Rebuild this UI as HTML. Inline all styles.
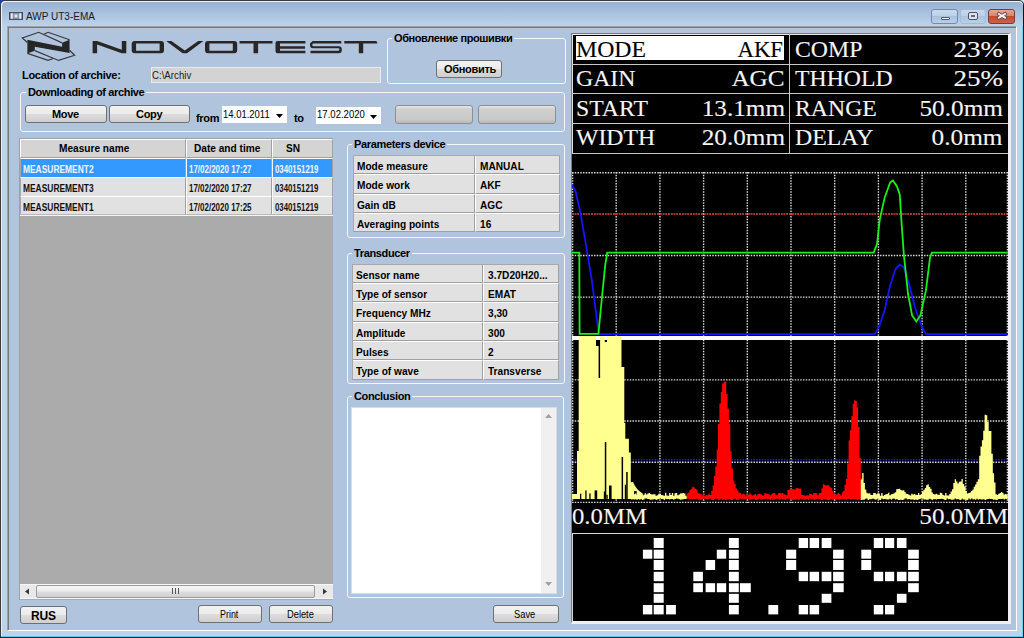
<!DOCTYPE html>
<html><head><meta charset="utf-8">
<style>
*{margin:0;padding:0;box-sizing:border-box}
html,body{width:1024px;height:638px;overflow:hidden;background:#1840d0}
body{position:relative;font-family:"Liberation Sans",sans-serif;font-size:11px;color:#000}
.a{position:absolute}
#win{left:0;top:0;width:1024px;height:638px;background:#bcd4ea;border:1px solid #3a3a3a;border-right-color:#061818;border-bottom-color:#0a2a30;border-radius:5px 5px 0 0}
#lw{left:1px;top:20px;width:1px;height:617px;background:#e4f0fa}
#cy{left:1022px;top:20px;width:1px;height:617px;background:#70d0f0}
#cyb{left:1px;top:636px;width:1022px;height:1px;background:#60c8e8}
#title{left:1px;top:1px;width:1022px;height:25px;border-top:1px solid #eef4fa;border-left:1px solid #eef4fa;border-radius:5px 5px 0 0;background:linear-gradient(#98b2d3,#bcd3eb)}
#client{left:7px;top:26px;width:1010px;height:605px;background:#b0c4de;border-top:1px solid #a0a0a0;border-left:1px solid #a0a0a0;border-right:1px solid #fff;border-bottom:1px solid #fff;box-shadow:inset 1px 1px 0 #787878}
.b{font-weight:bold;white-space:nowrap}
.t{white-space:nowrap;line-height:1;transform-origin:0 0;margin-top:1px}
.btn{border:1px solid #707070;border-radius:3px;background:linear-gradient(#f2f2f2 0,#ebebeb 50%,#dddddd 50%,#cfcfcf 100%);text-align:center;font-weight:bold;white-space:nowrap}
.grp{border:1px solid #f4f6f8;border-radius:3px}
.hc{background:#d4d4d4;border-top:1px solid #fff;border-left:1px solid #fff;border-right:1px solid #a0a0a0;border-bottom:1px solid #a0a0a0}
.dc{background:#e1e1e1;border-top:1px solid #fff;border-left:1px solid #fff;border-right:1px solid #a0a0a0;border-bottom:1px solid #a0a0a0}
.sc{background:#3399ff;border-top:1px solid #fff;border-left:1px solid #fff;border-right:1px solid #a0a0a0;border-bottom:1px solid #a0a0a0}
.ser{margin-top:0;font-family:"Liberation Serif",serif;font-size:23px;color:#f4f4f4;transform:scaleX(1.033);-webkit-text-stroke:0.1px currentColor}
.r{transform-origin:100% 0}
.gt{background:#b0c4de;padding:0 2px;font-weight:bold;white-space:nowrap}
</style></head><body>
<div class="a" style="left:1014px;top:0;width:10px;height:10px;background:#dce6ee"></div>
<div id="win" class="a"></div>
<div id="lw" class="a"></div><div id="cy" class="a"></div><div id="cyb" class="a"></div>
<div id="title" class="a"></div>
<div id="client" class="a"></div>


<!-- title bar -->
<svg class="a" style="left:9px;top:12px" width="14" height="8" viewBox="0 0 15 9" preserveAspectRatio="none"><rect x="0.5" y="0.5" width="14" height="8" fill="#7c8498" stroke="#40485a"/><rect x="2" y="1.5" width="2" height="6" fill="#f0f4fa"/><rect x="11" y="1.5" width="2" height="6" fill="#f0f4fa"/><rect x="5" y="2" width="5" height="5" fill="#aab2c0"/><rect x="6.5" y="3.5" width="2" height="2" fill="#fff"/></svg>
<div class="a t" style="left:26px;top:11px;font-size:10px;color:#1a1a1a">AWP UT3-EMA</div>
<div class="a" style="left:931px;top:9px;width:27px;height:15px;border:1px solid #6f8bb0;border-radius:3px;background:linear-gradient(#c9dbee 0,#bcd1e8 45%,#a9c1dd 50%,#b8cfe8 100%)"></div>
<div class="a" style="left:941px;top:17px;width:9px;height:3px;background:#f4f4f4;border:1px solid #4a5a70;border-radius:1px"></div>
<div class="a" style="left:960px;top:9px;width:26px;height:15px;border:1px solid #a4bad6;border-radius:3px;background:linear-gradient(#c6d9ee 0,#bbd0e8 45%,#adc4df 50%,#b9d0e8 100%)"></div>
<div class="a" style="left:968px;top:12px;width:10px;height:8px;background:#e2e2e2;border:1.5px solid #4e5366;border-radius:2px"></div>
<div class="a" style="left:971px;top:15px;width:4px;height:2px;background:#5a6a8c"></div>
<div class="a" style="left:988px;top:9px;width:27px;height:15px;border:1px solid #7a3a3a;border-radius:3px;background:linear-gradient(#e8a493 0,#d9826e 45%,#c44a2d 50%,#d0604a 100%)"></div>
<svg class="a" style="left:995px;top:10px" width="14" height="12" viewBox="0 0 14 12"><path d="M4,4 L10,7.6 M10,4 L4,7.6" stroke="#5a4a50" stroke-width="3.6" stroke-linecap="square"/><path d="M4,4 L10,7.6 M10,4 L4,7.6" stroke="#f4f4f4" stroke-width="2" stroke-linecap="square"/></svg>


<!-- logo -->
<svg class="a" style="left:18px;top:28px" width="80" height="38" viewBox="0 0 80 38">
<g transform="scale(0.078125)">
<polyline points="120,185 55,128 265,55 565,190" fill="none" stroke="#383838" stroke-width="15"/>
<polyline points="330,80 385,55 660,150" fill="none" stroke="#383838" stroke-width="15"/>
<polyline points="120,325 385,415 450,390" fill="none" stroke="#383838" stroke-width="15"/>
<polyline points="215,290 520,415 725,350 660,285" fill="none" stroke="#383838" stroke-width="15"/>
<polygon points="120,150 565,240 565,190 660,150 660,320 215,240 215,290 120,325" fill="#262626"/>
</g></svg>
<svg class="a" style="left:92px;top:40px" width="288" height="15" viewBox="92 40 288 15">
<g fill="#2a2626">
<path d="M92.6,41 h4.6 l24.6,8.8 V41 h4.5 v12.3 h-4.6 L97.1,44.5 V53.3 h-4.5z"/>
<path d="M134.7,41 h26.3 a3,3 0 0 1 3,3 v6.3 a3,3 0 0 1 -3,3 h-26.3 a3,3 0 0 1 -3,-3 v-6.3 a3,3 0 0 1 3,-3z M136.1,43.6 v7.1 h23.5 v-7.1z"/>
<path d="M166.2,41 h5.2 l13.4,9.6 l13.4,-9.6 h5.2 l-16.4,12.3 h-4.4z"/>
<path d="M208,41 h26.2 a3,3 0 0 1 3,3 v6.3 a3,3 0 0 1 -3,3 h-26.2 a3,3 0 0 1 -3,-3 v-6.3 a3,3 0 0 1 3,-3z M209.4,43.6 v7.1 h23.4 v-7.1z"/>
<path d="M239.5,41 h33 v2.6 h-14.4 v9.7 h-4.6 v-9.7 h-14z"/>
<path d="M277.5,41 h27.9 v2.6 h-25.4 v2.6 h25 v2.6 h-25 v1.9 h25.4 v2.6 h-27.9 a2,2 0 0 1 -2,-2 v-8.3 a2,2 0 0 1 2,-2z"/>
<path d="M312,41 h29.3 v2.6 h-27.7 a1.3,1.3 0 0 0 0,2.6 h25.2 a3,3 0 0 1 3,3 v1.1 a3,3 0 0 1 -3,3 h-28.3 v-2.6 h27.7 a1.2,1.2 0 0 0 0,-2.4 h-25.2 a3,3 0 0 1 -3,-3 v-1.3 a2.5,2.5 0 0 1 2.3,-2.3z"/>
<path d="M344.3,41 h31.5 a1.5,1.5 0 0 1 1.4,1.4 v1.2 h-14 v9.7 h-4.4 v-9.7 h-14.5z"/>
</g></svg>

<div class="a t b" style="left:22px;top:69px;font-size:11px;letter-spacing:-0.3px">Location of archive:</div>
<div class="a" style="left:151px;top:67px;width:230px;height:16px;background:#d3d3d3;border:1px solid #e6ebf0"></div>
<div class="a t" style="left:152px;top:69px;font-size:11px;transform:scaleX(.88);color:#202020">C:\Archiv</div>

<!-- Obnovlenie group -->
<div class="a grp" style="left:387px;top:38px;width:179px;height:46px"></div>
<div class="a t gt" style="left:392px;top:32px;font-size:11px;letter-spacing:-0.4px">Обновление прошивки</div>
<div class="a btn" style="left:436px;top:60px;width:66px;height:18px"></div>
<div class="a t b" style="left:444px;top:63px;font-size:11px;letter-spacing:-0.3px">Обновить</div>

<!-- Downloading group -->
<div class="a grp" style="left:20px;top:92px;width:545px;height:40px"></div>
<div class="a t gt" style="left:26px;top:86px;font-size:11px;letter-spacing:-0.35px">Downloading of archive</div>
<div class="a btn" style="left:25px;top:105px;width:82px;height:18px"></div>
<div class="a t b" style="left:52px;top:108px;font-size:11px;letter-spacing:-0.3px">Move</div>
<div class="a btn" style="left:109px;top:105px;width:81px;height:18px"></div>
<div class="a t b" style="left:136px;top:108px;font-size:11px;letter-spacing:-0.3px">Copy</div>
<div class="a t b" style="left:196px;top:112px;font-size:11px;letter-spacing:-0.3px">from</div>
<div class="a" style="left:222px;top:106px;width:65px;height:17px;background:#fff"></div>
<div class="a t" style="left:223px;top:108px;font-size:11px;transform:scaleX(.86)">14.01.2011</div>
<svg class="a" style="left:276px;top:114px" width="7" height="4"><path d="M0,0h7l-3.5,4z" fill="#000"/></svg>
<div class="a t b" style="left:294px;top:112px;font-size:11px;letter-spacing:-0.3px">to</div>
<div class="a" style="left:316px;top:107px;width:65px;height:17px;background:#fff"></div>
<div class="a t" style="left:317px;top:108px;font-size:11px;transform:scaleX(.87)">17.02.2020</div>
<svg class="a" style="left:370px;top:115px" width="7" height="4"><path d="M0,0h7l-3.5,4z" fill="#000"/></svg>
<div class="a" style="left:395px;top:105px;width:78px;height:19px;border:1px solid #8e8e8e;border-radius:3px;background:linear-gradient(#e6e6e6 0,#cfcfcf 20%,#c9c9c9 80%,#b8b8b8 100%)"></div>
<div class="a" style="left:478px;top:105px;width:78px;height:19px;border:1px solid #8e8e8e;border-radius:3px;background:linear-gradient(#e6e6e6 0,#cfcfcf 20%,#c9c9c9 80%,#b8b8b8 100%)"></div>


<!-- Parameters device -->
<div class="a grp" style="left:347px;top:144px;width:218px;height:94px"></div>
<div class="a t gt" style="left:352px;top:138px;font-size:11px;letter-spacing:-0.35px">Parameters device</div>
<div class="a" style="left:353px;top:155px;width:207px;height:77px;background:#a0a0a0"></div>
<div class="a dc" style="left:353px;top:155px;width:122px;height:19px"></div>
<div class="a dc" style="left:475px;top:155px;width:85px;height:19px"></div>
<div class="a t b" style="left:357px;top:160px;font-size:11px;transform:scaleX(.92)">Mode measure</div>
<div class="a t b" style="left:480px;top:160px;font-size:11px;transform:scaleX(.92)">MANUAL</div>
<div class="a dc" style="left:353px;top:174px;width:122px;height:20px"></div>
<div class="a dc" style="left:475px;top:174px;width:85px;height:20px"></div>
<div class="a t b" style="left:357px;top:179px;font-size:11px;transform:scaleX(.92)">Mode work</div>
<div class="a t b" style="left:480px;top:179px;font-size:11px;transform:scaleX(.92)">AKF</div>
<div class="a dc" style="left:353px;top:194px;width:122px;height:19px"></div>
<div class="a dc" style="left:475px;top:194px;width:85px;height:19px"></div>
<div class="a t b" style="left:357px;top:199px;font-size:11px;transform:scaleX(.92)">Gain dB</div>
<div class="a t b" style="left:480px;top:199px;font-size:11px;transform:scaleX(.92)">AGC</div>
<div class="a dc" style="left:353px;top:213px;width:122px;height:19px"></div>
<div class="a dc" style="left:475px;top:213px;width:85px;height:19px"></div>
<div class="a t b" style="left:357px;top:218px;font-size:11px;transform:scaleX(.92)">Averaging points</div>
<div class="a t b" style="left:480px;top:218px;font-size:11px;transform:scaleX(.92)">16</div>

<div class="a" style="left:353px;top:155px;width:207px;height:1px;background:#a8a8a8"></div><div class="a" style="left:353px;top:155px;width:1px;height:77px;background:#a8a8a8"></div>
<!-- Transducer -->
<div class="a grp" style="left:347px;top:253px;width:218px;height:131px"></div>
<div class="a t gt" style="left:352px;top:247px;font-size:11px;letter-spacing:-0.35px">Transducer</div>
<div class="a" style="left:352px;top:264px;width:207px;height:116px;background:#a0a0a0"></div>
<div class="a dc" style="left:352px;top:264px;width:131px;height:19px"></div>
<div class="a dc" style="left:483px;top:264px;width:76px;height:19px"></div>
<div class="a t b" style="left:356px;top:269px;font-size:11px;transform:scaleX(.92)">Sensor name</div>
<div class="a t b" style="left:488px;top:269px;font-size:11px;transform:scaleX(.92)">3.7D20H20...</div>
<div class="a dc" style="left:352px;top:283px;width:131px;height:19px"></div>
<div class="a dc" style="left:483px;top:283px;width:76px;height:19px"></div>
<div class="a t b" style="left:356px;top:288px;font-size:11px;transform:scaleX(.92)">Type of sensor</div>
<div class="a t b" style="left:488px;top:288px;font-size:11px;transform:scaleX(.92)">EMAT</div>
<div class="a dc" style="left:352px;top:302px;width:131px;height:20px"></div>
<div class="a dc" style="left:483px;top:302px;width:76px;height:20px"></div>
<div class="a t b" style="left:356px;top:307px;font-size:11px;transform:scaleX(.92)">Frequency MHz</div>
<div class="a t b" style="left:488px;top:307px;font-size:11px;transform:scaleX(.92)">3,30</div>
<div class="a dc" style="left:352px;top:322px;width:131px;height:19px"></div>
<div class="a dc" style="left:483px;top:322px;width:76px;height:19px"></div>
<div class="a t b" style="left:356px;top:327px;font-size:11px;transform:scaleX(.92)">Amplitude</div>
<div class="a t b" style="left:488px;top:327px;font-size:11px;transform:scaleX(.92)">300</div>
<div class="a dc" style="left:352px;top:341px;width:131px;height:19px"></div>
<div class="a dc" style="left:483px;top:341px;width:76px;height:19px"></div>
<div class="a t b" style="left:356px;top:346px;font-size:11px;transform:scaleX(.92)">Pulses</div>
<div class="a t b" style="left:488px;top:346px;font-size:11px;transform:scaleX(.92)">2</div>
<div class="a dc" style="left:352px;top:360px;width:131px;height:20px"></div>
<div class="a dc" style="left:483px;top:360px;width:76px;height:20px"></div>
<div class="a t b" style="left:356px;top:365px;font-size:11px;transform:scaleX(.92)">Type of wave</div>
<div class="a t b" style="left:488px;top:365px;font-size:11px;transform:scaleX(.92)">Transverse</div>

<div class="a" style="left:352px;top:264px;width:207px;height:1px;background:#a8a8a8"></div><div class="a" style="left:352px;top:264px;width:1px;height:116px;background:#a8a8a8"></div>
<!-- Conclusion -->
<div class="a grp" style="left:347px;top:396px;width:217px;height:202px"></div>
<div class="a t gt" style="left:352px;top:390px;font-size:11px;letter-spacing:-0.35px">Conclusion</div>
<div class="a" style="left:351px;top:407px;width:206px;height:187px;background:#fff;border:1px solid #d8dde3"></div>
<div class="a" style="left:541px;top:408px;width:15px;height:185px;background:#f0f0f0"></div>
<svg class="a" style="left:545px;top:414px" width="8" height="5"><path d="M0,4h7l-3.5,-4z" fill="#a0a0a0"/></svg>
<svg class="a" style="left:545px;top:582px" width="8" height="5"><path d="M0,0h7l-3.5,4z" fill="#a0a0a0"/></svg>
<div class="a btn" style="left:493px;top:605px;width:66px;height:18px"></div>
<div class="a t" style="left:514px;top:608px;font-size:11px;transform:scaleX(.85)">Save</div>

<!-- device panel -->
<div class="a" style="left:571px;top:33px;width:440px;height:591px;background:#000;border-top:1px solid #7a7a7a;border-left:1px solid #7a7a7a;border-right:3px solid #f0f0f0;border-bottom:3px solid #f0f0f0"></div>
<div class="a" style="left:572px;top:34px;width:436px;height:1px;background:#e8e8e8"></div>
<div class="a" style="left:572px;top:34px;width:1px;height:120px;background:#e0e0e0"></div>
<div class="a" style="left:572px;top:64px;width:436px;height:1px;background:#c8c8c8"></div>
<div class="a" style="left:572px;top:93px;width:436px;height:1px;background:#c8c8c8"></div>
<div class="a" style="left:572px;top:123px;width:436px;height:1px;background:#c8c8c8"></div>
<div class="a" style="left:572px;top:153px;width:436px;height:1px;background:#c8c8c8"></div>
<div class="a" style="left:789px;top:34px;width:1px;height:120px;background:#c8c8c8"></div>
<div class="a" style="left:576px;top:36px;width:208px;height:24px;background:#fff"></div>
<div class="a t ser" style="left:576px;top:38px;color:#000">MODE</div>
<div class="a t ser r" style="transform:scaleX(0.99);right:241px;top:38px;color:#000">AKF</div>
<div class="a t ser" style="left:795px;top:38px">COMP</div>
<div class="a t ser r" style="transform:scaleX(1.177);right:21px;top:38px">23%</div>
<div class="a t ser" style="left:576px;top:67px;color:#f4f4f4">GAIN</div>
<div class="a t ser r" style="transform:scaleX(1.095);right:239px;top:67px;color:#f4f4f4">AGC</div>
<div class="a t ser" style="left:795px;top:67px">THHOLD</div>
<div class="a t ser r" style="transform:scaleX(1.177);right:21px;top:67px">25%</div>
<div class="a t ser" style="left:576px;top:97px;color:#f4f4f4">START</div>
<div class="a t ser r" style="transform:scaleX(1.095);right:239px;top:97px;color:#f4f4f4">13.1mm</div>
<div class="a t ser" style="left:795px;top:97px">RANGE</div>
<div class="a t ser r" style="transform:scaleX(1.100);right:21px;top:97px">50.0mm</div>
<div class="a t ser" style="left:576px;top:126px;color:#f4f4f4">WIDTH</div>
<div class="a t ser r" style="transform:scaleX(1.095);right:239px;top:126px;color:#f4f4f4">20.0mm</div>
<div class="a t ser" style="left:795px;top:126px">DELAY</div>
<div class="a t ser r" style="transform:scaleX(1.100);right:21px;top:126px">0.0mm</div>
<svg class="a" style="left:0;top:0" width="1024" height="638" viewBox="0 0 1024 638">
<defs><clipPath id="cc"><rect x="572" y="155" width="436" height="378"/></clipPath></defs>
<g clip-path="url(#cc)">
<g stroke="#d8d8d8" stroke-width="1.4" stroke-dasharray="1.5 1.25"><line x1="572.6" y1="172" x2="572.6" y2="503" /><line x1="1007.4" y1="172" x2="1007.4" y2="503" /><line x1="616.2" y1="172" x2="616.2" y2="503" /><line x1="659.9" y1="172" x2="659.9" y2="503" /><line x1="703.6" y1="172" x2="703.6" y2="503" /><line x1="747.3" y1="172" x2="747.3" y2="503" /><line x1="791.0" y1="172" x2="791.0" y2="503" /><line x1="834.7" y1="172" x2="834.7" y2="503" /><line x1="878.4" y1="172" x2="878.4" y2="503" /><line x1="922.1" y1="172" x2="922.1" y2="503" /><line x1="965.8" y1="172" x2="965.8" y2="503" /><line x1="572" y1="172.7" x2="1007" y2="172.7" /><line x1="572" y1="214.0" x2="1007" y2="214.0" /><line x1="572" y1="255.5" x2="1007" y2="255.5" /><line x1="572" y1="297.1" x2="1007" y2="297.1" /><line x1="572" y1="379.9" x2="1007" y2="379.9" /><line x1="572" y1="421.0" x2="1007" y2="421.0" /><line x1="572" y1="462.2" x2="1007" y2="462.2" /><line x1="572" y1="502.4" x2="1007" y2="502.4" /></g>
<line x1="572" y1="214" x2="1007" y2="214" stroke="#c80000" stroke-width="1.4" stroke-dasharray="1.5 1.25"/>
<line x1="572" y1="459.8" x2="1007" y2="459.8" stroke="#1818e0" stroke-width="1.5" stroke-dasharray="1.5 1.25"/>
<rect x="572" y="336" width="436" height="4" fill="#fafafa"/>
<!--ECHO--><polygon fill="#ffff90" points="572,494 577,494 577,451 578.7,451 578.7,336 621.5,336 621.5,367 624.3,367 624.3,423 625.3,423 625.3,438.7 628.9,438.7 628.9,452.6 630.8,452.6 630.8,482.3 633,482 635,486 638,490 642.9,493.8 642.9,499 572,499"/>
<g fill="#000">
<rect x="598.6" y="340" width="1.5" height="38"/>
<rect x="596" y="340" width="3" height="6"/>
<rect x="596" y="336" width="4" height="4" fill="#fafafa"/>
<rect x="604.8" y="336" width="2.2" height="4" fill="#fafafa"/>
<rect x="604.8" y="340" width="2.2" height="2"/>
<rect x="604.8" y="442" width="1.5" height="57"/>
<rect x="621.6" y="457" width="1.5" height="42"/>
<rect x="626.2" y="472" width="1.5" height="27"/>
<rect x="580.0" y="493.7" width="1.3" height="5.3"/>
<rect x="585.3" y="490.4" width="1.3" height="8.6"/>
<rect x="589.3" y="493.4" width="1.3" height="5.6"/>
<rect x="594.6" y="490.4" width="2.6" height="8.6"/>
<rect x="603.8" y="491.5" width="1.3" height="7.5"/>
<rect x="606.4" y="494.8" width="1.3" height="4.2"/>
<rect x="609.0" y="485.5" width="2.6" height="13.5"/>
<rect x="624.8" y="484.7" width="1.3" height="14.3"/>
<rect x="634.1" y="491.1" width="2.6" height="7.9"/>
</g>
<path fill="#ffff90" d="M631.0,494.2 L632.4,494.2 L632.4,495.6 L633.7,495.6 L633.7,494.3 L635.1,494.3 L635.1,493.4 L636.4,493.4 L636.4,494.7 L637.8,494.7 L637.8,493.1 L639.2,493.1 L639.2,493.1 L640.5,493.1 L640.5,494.9 L641.9,494.9 L641.9,495.7 L643.2,495.7 L643.2,494.8 L644.6,494.8 L644.6,493.3 L646.0,493.3 L646.0,494.4 L647.3,494.4 L647.3,493.4 L648.7,493.4 L648.7,492.9 L650.0,492.9 L650.0,494.1 L651.4,494.1 L651.4,494.4 L652.8,494.4 L652.8,494.3 L654.1,494.3 L654.1,494.2 L655.5,494.2 L655.5,495.8 L656.8,495.8 L656.8,495.3 L658.2,495.3 L658.2,493.7 L659.6,493.7 L659.6,493.7 L660.9,493.7 L660.9,495.1 L662.3,495.1 L662.3,495.3 L663.6,495.3 L663.6,495.7 L665.0,495.7 L665.0,492.8 L666.4,492.8 L666.4,495.5 L667.7,495.5 L667.7,495.7 L669.1,495.7 L669.1,493.0 L670.4,493.0 L670.4,495.1 L671.8,495.1 L671.8,493.1 L673.2,493.1 L673.2,495.7 L674.5,495.7 L674.5,493.2 L675.9,493.2 L675.9,493.1 L677.2,493.1 L677.2,495.2 L678.6,495.2 L678.6,494.5 L680.0,494.5 L680.0,493.4 L681.3,493.4 L681.3,493.2 L682.7,493.2 L682.7,493.1 L684.0,493.1 L684.0,493.4 L685.4,493.4 L685.4,495.7 L686.8,495.7 L686.8,499.0 L685.4,499.0 L685.4,498.9 L684.0,498.9 L684.0,499.2 L682.7,499.2 L682.7,499.5 L681.3,499.5 L681.3,499.7 L680.0,499.7 L680.0,499.2 L678.6,499.2 L678.6,498.8 L677.2,498.8 L677.2,498.6 L675.9,498.6 L675.9,498.9 L674.5,498.9 L674.5,499.7 L673.2,499.7 L673.2,499.0 L671.8,499.0 L671.8,498.9 L670.4,498.9 L670.4,499.5 L669.1,499.5 L669.1,499.1 L667.7,499.1 L667.7,499.3 L666.4,499.3 L666.4,498.8 L665.0,498.8 L665.0,499.9 L663.6,499.9 L663.6,499.1 L662.3,499.1 L662.3,499.1 L660.9,499.1 L660.9,498.6 L659.6,498.6 L659.6,498.9 L658.2,498.9 L658.2,499.6 L656.8,499.6 L656.8,500.1 L655.5,500.1 L655.5,498.9 L654.1,498.9 L654.1,499.6 L652.8,499.6 L652.8,499.5 L651.4,499.5 L651.4,499.8 L650.0,499.8 L650.0,499.2 L648.7,499.2 L648.7,498.9 L647.3,498.9 L647.3,498.6 L646.0,498.6 L646.0,498.5 L644.6,498.5 L644.6,499.5 L643.2,499.5 L643.2,500.0 L641.9,500.0 L641.9,498.6 L640.5,498.6 L640.5,499.8 L639.2,499.8 L639.2,499.0 L637.8,499.0 L637.8,499.8 L636.4,499.8 L636.4,499.3 L635.1,499.3 L635.1,499.4 L633.7,499.4 L633.7,499.2 L632.4,499.2 L632.4,499.4 L631.0,499.4Z"/>
<path fill="#ff0000" d="M686.8,493.2 L688.1,493.2 L688.1,492.6 L689.5,492.6 L689.5,489.9 L690.8,489.9 L690.8,488.7 L692.2,488.7 L692.2,486.8 L693.6,486.8 L693.6,487.4 L694.9,487.4 L694.9,488.7 L696.3,488.7 L696.3,489.7 L697.6,489.7 L697.6,493.3 L699.0,493.3 L699.0,493.5 L700.4,493.5 L700.4,493.9 L701.7,493.9 L701.7,495.2 L703.1,495.2 L703.1,493.1 L704.4,493.1 L704.4,495.7 L705.8,495.7 L705.8,494.9 L707.2,494.9 L707.2,495.3 L708.5,495.3 L708.5,493.7 L709.9,493.7 L709.9,495.0 L711.2,495.0 L711.2,490.7 L712.6,490.7 L712.6,485.2 L714.0,485.2 L714.0,475.9 L715.3,475.9 L715.3,466.6 L716.7,466.6 L716.7,449.6 L718.0,449.6 L718.0,424.1 L719.4,424.1 L719.4,403.5 L720.8,403.5 L720.8,391.9 L722.1,391.9 L722.1,383.4 L723.5,383.4 L723.5,381.9 L724.8,381.9 L724.8,381.5 L726.2,381.5 L726.2,393.9 L727.6,393.9 L727.6,408.7 L728.9,408.7 L728.9,424.1 L730.3,424.1 L730.3,451.2 L731.6,451.2 L731.6,468.6 L733.0,468.6 L733.0,480.6 L734.4,480.6 L734.4,484.0 L735.7,484.0 L735.7,488.4 L737.1,488.4 L737.1,490.4 L738.4,490.4 L738.4,492.5 L739.8,492.5 L739.8,493.1 L741.2,493.1 L741.2,494.6 L742.5,494.6 L742.5,493.5 L743.9,493.5 L743.9,494.3 L745.2,494.3 L745.2,495.6 L746.6,495.6 L746.6,492.8 L748.0,492.8 L748.0,494.8 L749.3,494.8 L749.3,493.3 L750.7,493.3 L750.7,494.8 L752.0,494.8 L752.0,495.5 L753.4,495.5 L753.4,494.8 L754.8,494.8 L754.8,494.1 L756.1,494.1 L756.1,495.5 L757.5,495.5 L757.5,494.0 L758.8,494.0 L758.8,493.7 L760.2,493.7 L760.2,494.3 L761.6,494.3 L761.6,495.3 L762.9,495.3 L762.9,495.7 L764.3,495.7 L764.3,493.3 L765.6,493.3 L765.6,493.6 L767.0,493.6 L767.0,494.0 L768.4,494.0 L768.4,494.3 L769.7,494.3 L769.7,495.3 L771.1,495.3 L771.1,494.2 L772.4,494.2 L772.4,492.9 L773.8,492.9 L773.8,492.9 L775.2,492.9 L775.2,494.5 L776.5,494.5 L776.5,495.2 L777.9,495.2 L777.9,493.2 L779.2,493.2 L779.2,492.9 L780.6,492.9 L780.6,493.5 L782.0,493.5 L782.0,492.9 L783.3,492.9 L783.3,494.1 L784.7,494.1 L784.7,494.8 L786.0,494.8 L786.0,495.3 L787.4,495.3 L787.4,490.0 L788.8,490.0 L788.8,489.4 L790.1,489.4 L790.1,488.4 L791.5,488.4 L791.5,489.0 L792.8,489.0 L792.8,489.3 L794.2,489.3 L794.2,489.5 L795.6,489.5 L795.6,488.2 L796.9,488.2 L796.9,487.9 L798.3,487.9 L798.3,488.8 L799.6,488.8 L799.6,488.4 L801.0,488.4 L801.0,495.0 L802.4,495.0 L802.4,495.0 L803.7,495.0 L803.7,495.5 L805.1,495.5 L805.1,495.7 L806.4,495.7 L806.4,495.2 L807.8,495.2 L807.8,495.5 L809.2,495.5 L809.2,493.8 L810.5,493.8 L810.5,494.1 L811.9,494.1 L811.9,495.1 L813.2,495.1 L813.2,492.9 L814.6,492.9 L814.6,493.0 L816.0,493.0 L816.0,493.3 L817.3,493.3 L817.3,495.2 L818.7,495.2 L818.7,493.2 L820.0,493.2 L820.0,493.0 L821.4,493.0 L821.4,488.5 L822.8,488.5 L822.8,484.2 L824.1,484.2 L824.1,484.7 L825.5,484.7 L825.5,485.6 L826.8,485.6 L826.8,485.2 L828.2,485.2 L828.2,485.6 L829.6,485.6 L829.6,487.2 L830.9,487.2 L830.9,488.1 L832.3,488.1 L832.3,491.0 L833.6,491.0 L833.6,494.3 L835.0,494.3 L835.0,495.2 L836.4,495.2 L836.4,494.3 L837.7,494.3 L837.7,493.0 L839.1,493.0 L839.1,494.0 L840.4,494.0 L840.4,495.6 L841.8,495.6 L841.8,492.2 L843.2,492.2 L843.2,490.9 L844.5,490.9 L844.5,484.8 L845.9,484.8 L845.9,478.7 L847.2,478.7 L847.2,463.6 L848.6,463.6 L848.6,440.5 L850.0,440.5 L850.0,430.3 L851.3,430.3 L851.3,416.2 L852.7,416.2 L852.7,403.8 L854.0,403.8 L854.0,400.3 L855.4,400.3 L855.4,401.0 L856.8,401.0 L856.8,407.2 L858.1,407.2 L858.1,427.0 L859.5,427.0 L859.5,458.1 L860.8,458.1 L860.8,478.0 L862.2,478.0 L862.2,500.0 L860.8,500.0 L860.8,499.9 L859.5,499.9 L859.5,498.9 L858.1,498.9 L858.1,499.9 L856.8,499.9 L856.8,499.5 L855.4,499.5 L855.4,499.3 L854.0,499.3 L854.0,499.2 L852.7,499.2 L852.7,498.9 L851.3,498.9 L851.3,499.7 L850.0,499.7 L850.0,499.1 L848.6,499.1 L848.6,498.9 L847.2,498.9 L847.2,499.7 L845.9,499.7 L845.9,499.5 L844.5,499.5 L844.5,499.3 L843.2,499.3 L843.2,499.2 L841.8,499.2 L841.8,498.9 L840.4,498.9 L840.4,500.0 L839.1,500.0 L839.1,499.4 L837.7,499.4 L837.7,499.6 L836.4,499.6 L836.4,499.4 L835.0,499.4 L835.0,499.1 L833.6,499.1 L833.6,500.1 L832.3,500.1 L832.3,499.3 L830.9,499.3 L830.9,499.4 L829.6,499.4 L829.6,499.9 L828.2,499.9 L828.2,499.9 L826.8,499.9 L826.8,499.4 L825.5,499.4 L825.5,499.5 L824.1,499.5 L824.1,499.3 L822.8,499.3 L822.8,500.0 L821.4,500.0 L821.4,499.6 L820.0,499.6 L820.0,499.3 L818.7,499.3 L818.7,498.7 L817.3,498.7 L817.3,499.0 L816.0,499.0 L816.0,499.8 L814.6,499.8 L814.6,499.8 L813.2,499.8 L813.2,499.3 L811.9,499.3 L811.9,499.4 L810.5,499.4 L810.5,498.6 L809.2,498.6 L809.2,499.9 L807.8,499.9 L807.8,499.0 L806.4,499.0 L806.4,499.4 L805.1,499.4 L805.1,500.1 L803.7,500.1 L803.7,498.8 L802.4,498.8 L802.4,499.5 L801.0,499.5 L801.0,498.8 L799.6,498.8 L799.6,500.0 L798.3,500.0 L798.3,499.4 L796.9,499.4 L796.9,499.5 L795.6,499.5 L795.6,499.7 L794.2,499.7 L794.2,499.9 L792.8,499.9 L792.8,499.7 L791.5,499.7 L791.5,499.6 L790.1,499.6 L790.1,498.8 L788.8,498.8 L788.8,498.5 L787.4,498.5 L787.4,498.8 L786.0,498.8 L786.0,499.8 L784.7,499.8 L784.7,499.5 L783.3,499.5 L783.3,499.5 L782.0,499.5 L782.0,498.7 L780.6,498.7 L780.6,499.8 L779.2,499.8 L779.2,499.2 L777.9,499.2 L777.9,498.5 L776.5,498.5 L776.5,499.0 L775.2,499.0 L775.2,499.6 L773.8,499.6 L773.8,499.9 L772.4,499.9 L772.4,498.6 L771.1,498.6 L771.1,500.1 L769.7,500.1 L769.7,499.0 L768.4,499.0 L768.4,499.5 L767.0,499.5 L767.0,498.8 L765.6,498.8 L765.6,499.2 L764.3,499.2 L764.3,498.9 L762.9,498.9 L762.9,499.6 L761.6,499.6 L761.6,499.8 L760.2,499.8 L760.2,498.7 L758.8,498.7 L758.8,499.4 L757.5,499.4 L757.5,499.9 L756.1,499.9 L756.1,499.8 L754.8,499.8 L754.8,498.8 L753.4,498.8 L753.4,499.0 L752.0,499.0 L752.0,499.2 L750.7,499.2 L750.7,499.9 L749.3,499.9 L749.3,498.8 L748.0,498.8 L748.0,499.0 L746.6,499.0 L746.6,498.9 L745.2,498.9 L745.2,499.5 L743.9,499.5 L743.9,499.6 L742.5,499.6 L742.5,499.3 L741.2,499.3 L741.2,498.5 L739.8,498.5 L739.8,499.8 L738.4,499.8 L738.4,499.7 L737.1,499.7 L737.1,499.9 L735.7,499.9 L735.7,498.6 L734.4,498.6 L734.4,499.1 L733.0,499.1 L733.0,499.9 L731.6,499.9 L731.6,499.9 L730.3,499.9 L730.3,499.1 L728.9,499.1 L728.9,499.6 L727.6,499.6 L727.6,499.7 L726.2,499.7 L726.2,500.1 L724.8,500.1 L724.8,499.3 L723.5,499.3 L723.5,500.0 L722.1,500.0 L722.1,498.5 L720.8,498.5 L720.8,499.4 L719.4,499.4 L719.4,500.1 L718.0,500.1 L718.0,498.7 L716.7,498.7 L716.7,498.8 L715.3,498.8 L715.3,498.9 L714.0,498.9 L714.0,500.0 L712.6,500.0 L712.6,499.9 L711.2,499.9 L711.2,498.6 L709.9,498.6 L709.9,498.8 L708.5,498.8 L708.5,499.5 L707.2,499.5 L707.2,498.9 L705.8,498.9 L705.8,498.9 L704.4,498.9 L704.4,498.6 L703.1,498.6 L703.1,499.2 L701.7,499.2 L701.7,500.0 L700.4,500.0 L700.4,499.7 L699.0,499.7 L699.0,499.8 L697.6,499.8 L697.6,498.8 L696.3,498.8 L696.3,499.3 L694.9,499.3 L694.9,499.1 L693.6,499.1 L693.6,499.4 L692.2,499.4 L692.2,499.0 L690.8,499.0 L690.8,498.9 L689.5,498.9 L689.5,498.7 L688.1,498.7 L688.1,499.1 L686.8,499.1Z"/>
<path fill="#ffff90" d="M860.8,479.6 L862.2,479.6 L862.2,472.9 L863.6,472.9 L863.6,483.0 L864.9,483.0 L864.9,489.4 L866.3,489.4 L866.3,492.7 L867.6,492.7 L867.6,493.4 L869.0,493.4 L869.0,493.3 L870.4,493.3 L870.4,495.1 L871.7,495.1 L871.7,494.9 L873.1,494.9 L873.1,493.0 L874.4,493.0 L874.4,492.9 L875.8,492.9 L875.8,494.3 L877.2,494.3 L877.2,493.2 L878.5,493.2 L878.5,493.4 L879.9,493.4 L879.9,495.8 L881.2,495.8 L881.2,493.1 L882.6,493.1 L882.6,495.7 L884.0,495.7 L884.0,495.1 L885.3,495.1 L885.3,494.2 L886.7,494.2 L886.7,494.1 L888.0,494.1 L888.0,492.8 L889.4,492.8 L889.4,495.3 L890.8,495.3 L890.8,494.2 L892.1,494.2 L892.1,494.0 L893.5,494.0 L893.5,493.3 L894.8,493.3 L894.8,492.3 L896.2,492.3 L896.2,489.3 L897.6,489.3 L897.6,489.1 L898.9,489.1 L898.9,488.7 L900.3,488.7 L900.3,490.1 L901.6,490.1 L901.6,490.5 L903.0,490.5 L903.0,490.3 L904.4,490.3 L904.4,491.9 L905.7,491.9 L905.7,493.8 L907.1,493.8 L907.1,493.9 L908.4,493.9 L908.4,494.7 L909.8,494.7 L909.8,495.6 L911.2,495.6 L911.2,493.8 L912.5,493.8 L912.5,494.5 L913.9,494.5 L913.9,494.0 L915.2,494.0 L915.2,494.7 L916.6,494.7 L916.6,495.1 L918.0,495.1 L918.0,492.9 L919.3,492.9 L919.3,495.0 L920.7,495.0 L920.7,494.0 L922.0,494.0 L922.0,491.5 L923.4,491.5 L923.4,489.8 L924.8,489.8 L924.8,488.0 L926.1,488.0 L926.1,485.2 L927.5,485.2 L927.5,484.2 L928.8,484.2 L928.8,487.1 L930.2,487.1 L930.2,488.7 L931.6,488.7 L931.6,492.5 L932.9,492.5 L932.9,494.1 L934.3,494.1 L934.3,494.6 L935.6,494.6 L935.6,493.7 L937.0,493.7 L937.0,494.5 L938.4,494.5 L938.4,494.9 L939.7,494.9 L939.7,492.8 L941.1,492.8 L941.1,492.9 L942.4,492.9 L942.4,495.1 L943.8,495.1 L943.8,495.5 L945.2,495.5 L945.2,493.0 L946.5,493.0 L946.5,495.6 L947.9,495.6 L947.9,495.5 L949.2,495.5 L949.2,494.0 L950.6,494.0 L950.6,491.5 L952.0,491.5 L952.0,489.2 L953.3,489.2 L953.3,483.1 L954.7,483.1 L954.7,479.2 L956.0,479.2 L956.0,481.4 L957.4,481.4 L957.4,483.4 L958.8,483.4 L958.8,481.8 L960.1,481.8 L960.1,481.6 L961.5,481.6 L961.5,478.9 L962.8,478.9 L962.8,483.9 L964.2,483.9 L964.2,486.4 L965.6,486.4 L965.6,491.0 L966.9,491.0 L966.9,493.4 L968.3,493.4 L968.3,493.1 L969.6,493.1 L969.6,492.4 L971.0,492.4 L971.0,491.0 L972.4,491.0 L972.4,489.6 L973.7,489.6 L973.7,486.7 L975.1,486.7 L975.1,484.5 L976.4,484.5 L976.4,481.7 L977.8,481.7 L977.8,479.3 L979.2,479.3 L979.2,455.8 L980.5,455.8 L980.5,446.5 L981.9,446.5 L981.9,440.3 L983.2,440.3 L983.2,430.8 L984.6,430.8 L984.6,414.7 L986.0,414.7 L986.0,415.2 L987.3,415.2 L987.3,422.0 L988.7,422.0 L988.7,431.1 L990.0,431.1 L990.0,431.1 L991.4,431.1 L991.4,453.7 L992.8,453.7 L992.8,473.2 L994.1,473.2 L994.1,482.5 L995.5,482.5 L995.5,494.2 L996.8,494.2 L996.8,495.1 L998.2,495.1 L998.2,493.7 L999.6,493.7 L999.6,493.1 L1000.9,493.1 L1000.9,491.9 L1002.3,491.9 L1002.3,493.1 L1003.6,493.1 L1003.6,494.5 L1005.0,494.5 L1005.0,494.1 L1006.4,494.1 L1006.4,494.8 L1007.7,494.8 L1007.7,499.0 L1006.4,499.0 L1006.4,498.8 L1005.0,498.8 L1005.0,499.4 L1003.6,499.4 L1003.6,498.8 L1002.3,498.8 L1002.3,499.1 L1000.9,499.1 L1000.9,498.9 L999.6,498.9 L999.6,499.1 L998.2,499.1 L998.2,499.8 L996.8,499.8 L996.8,500.0 L995.5,500.0 L995.5,499.6 L994.1,499.6 L994.1,499.7 L992.8,499.7 L992.8,499.0 L991.4,499.0 L991.4,499.0 L990.0,499.0 L990.0,498.8 L988.7,498.8 L988.7,499.0 L987.3,499.0 L987.3,499.4 L986.0,499.4 L986.0,499.9 L984.6,499.9 L984.6,499.2 L983.2,499.2 L983.2,499.4 L981.9,499.4 L981.9,499.5 L980.5,499.5 L980.5,498.9 L979.2,498.9 L979.2,499.7 L977.8,499.7 L977.8,498.7 L976.4,498.7 L976.4,499.7 L975.1,499.7 L975.1,499.3 L973.7,499.3 L973.7,499.4 L972.4,499.4 L972.4,498.6 L971.0,498.6 L971.0,499.5 L969.6,499.5 L969.6,498.6 L968.3,498.6 L968.3,500.0 L966.9,500.0 L966.9,499.7 L965.6,499.7 L965.6,499.6 L964.2,499.6 L964.2,499.5 L962.8,499.5 L962.8,498.7 L961.5,498.7 L961.5,500.0 L960.1,500.0 L960.1,499.7 L958.8,499.7 L958.8,498.9 L957.4,498.9 L957.4,499.2 L956.0,499.2 L956.0,498.6 L954.7,498.6 L954.7,499.5 L953.3,499.5 L953.3,499.8 L952.0,499.8 L952.0,499.7 L950.6,499.7 L950.6,498.9 L949.2,498.9 L949.2,499.2 L947.9,499.2 L947.9,498.6 L946.5,498.6 L946.5,500.1 L945.2,500.1 L945.2,499.7 L943.8,499.7 L943.8,499.1 L942.4,499.1 L942.4,498.8 L941.1,498.8 L941.1,498.9 L939.7,498.9 L939.7,499.0 L938.4,499.0 L938.4,499.0 L937.0,499.0 L937.0,499.5 L935.6,499.5 L935.6,499.1 L934.3,499.1 L934.3,499.3 L932.9,499.3 L932.9,500.0 L931.6,500.0 L931.6,499.3 L930.2,499.3 L930.2,498.8 L928.8,498.8 L928.8,499.7 L927.5,499.7 L927.5,499.8 L926.1,499.8 L926.1,499.4 L924.8,499.4 L924.8,499.4 L923.4,499.4 L923.4,498.7 L922.0,498.7 L922.0,498.6 L920.7,498.6 L920.7,498.9 L919.3,498.9 L919.3,499.5 L918.0,499.5 L918.0,500.1 L916.6,500.1 L916.6,499.6 L915.2,499.6 L915.2,500.1 L913.9,500.1 L913.9,499.4 L912.5,499.4 L912.5,499.6 L911.2,499.6 L911.2,499.6 L909.8,499.6 L909.8,498.9 L908.4,498.9 L908.4,499.5 L907.1,499.5 L907.1,498.5 L905.7,498.5 L905.7,498.6 L904.4,498.6 L904.4,499.7 L903.0,499.7 L903.0,499.9 L901.6,499.9 L901.6,499.8 L900.3,499.8 L900.3,500.0 L898.9,500.0 L898.9,500.1 L897.6,500.1 L897.6,499.1 L896.2,499.1 L896.2,499.6 L894.8,499.6 L894.8,498.5 L893.5,498.5 L893.5,498.8 L892.1,498.8 L892.1,499.7 L890.8,499.7 L890.8,498.8 L889.4,498.8 L889.4,499.6 L888.0,499.6 L888.0,499.5 L886.7,499.5 L886.7,499.3 L885.3,499.3 L885.3,499.0 L884.0,499.0 L884.0,499.2 L882.6,499.2 L882.6,498.6 L881.2,498.6 L881.2,500.0 L879.9,500.0 L879.9,499.8 L878.5,499.8 L878.5,498.8 L877.2,498.8 L877.2,499.4 L875.8,499.4 L875.8,499.4 L874.4,499.4 L874.4,498.7 L873.1,498.7 L873.1,498.8 L871.7,498.8 L871.7,499.3 L870.4,499.3 L870.4,499.3 L869.0,499.3 L869.0,500.0 L867.6,500.0 L867.6,498.5 L866.3,498.5 L866.3,498.7 L864.9,498.7 L864.9,499.8 L863.6,499.8 L863.6,499.7 L862.2,499.7 L862.2,499.9 L860.8,499.9Z"/><!--/ECHO-->
<polyline fill="none" stroke="#1414ff" stroke-width="1.8" points="571.6,184.8 575.4,190.7 579.9,210.1 585.9,244.4 591.8,280.1 598.4,330.8 599.3,334.2 875,334.2 879.2,326.4 884.7,310 890.2,285.3 895.7,268.8 899.8,264.7 903.9,267.4 909.4,285.3 914.9,307.2 921.7,326.4 925.9,334.2 1008,334.2"/>
<polyline fill="none" stroke="#18f018" stroke-width="1.8" points="572,252.6 579.3,252.6 579.6,333.8 598.4,333.8 602.2,295 605.2,265.2 607.3,252.6 873.7,252.6 877,244 879.8,219.4 884.7,197.4 890.2,182.3 892.9,180.4 897,186.5 899.8,194.7 901.7,224.9 903.9,255.1 908,293.5 912.1,315.4 916.3,321.5 920.4,315.4 925.9,290.7 930,257.8 931.9,252.6 1008,252.6"/>

</g>
</svg>





<!-- left: table area -->
<div class="a" style="left:19px;top:138px;width:314px;height:462px;background:#ababab;border-top:1px solid #a0a0a0;border-left:1px solid #a0a0a0"></div>
<div class="a hc" style="left:20px;top:139px;width:166px;height:19px"></div>
<div class="a hc" style="left:186px;top:139px;width:86px;height:19px"></div>
<div class="a hc" style="left:272px;top:139px;width:61px;height:19px"></div>
<div class="a t b" style="left:59px;top:142px;font-size:11px;transform:scaleX(.92)">Measure name</div>
<div class="a t b" style="left:194px;top:142px;font-size:11px;transform:scaleX(.92)">Date and time</div>
<div class="a t b" style="left:286px;top:142px;font-size:11px;transform:scaleX(.92)">SN</div>
<div class="a" style="left:20px;top:158px;width:166px;height:19px;background:#3399ff;border-top:1px solid #fff;border-left:1px solid #a8a8a8;border-right:1px solid #a0a0a0"></div>
<div class="a" style="left:186px;top:158px;width:86px;height:19px;background:#3399ff;border-top:1px solid #fff;border-left:1px solid #fff;border-right:1px solid #a0a0a0"></div>
<div class="a" style="left:272px;top:158px;width:61px;height:19px;background:#3399ff;border-top:1px solid #fff;border-left:1px solid #fff;border-right:1px solid #a0a0a0"></div>
<div class="a t b" style="left:23px;top:163px;font-size:11px;transform:scaleX(.765);color:#f4f4ff">MEASUREMENT2</div>
<div class="a t b" style="left:189px;top:163px;font-size:11px;transform:scaleX(.725);color:#f4f4ff">17/02/2020 17:27</div>
<div class="a t b" style="left:275px;top:163px;font-size:11px;transform:scaleX(.71);color:#f4f4ff">0340151219</div>
<div class="a" style="left:20px;top:177px;width:166px;height:19px;background:#e1e1e1;border-top:1px solid #fff;border-left:1px solid #a8a8a8;border-right:1px solid #a0a0a0"></div>
<div class="a" style="left:186px;top:177px;width:86px;height:19px;background:#e1e1e1;border-top:1px solid #fff;border-left:1px solid #fff;border-right:1px solid #a0a0a0"></div>
<div class="a" style="left:272px;top:177px;width:61px;height:19px;background:#e1e1e1;border-top:1px solid #fff;border-left:1px solid #fff;border-right:1px solid #a0a0a0"></div>
<div class="a t b" style="left:23px;top:182px;font-size:11px;transform:scaleX(.765);color:#111">MEASUREMENT3</div>
<div class="a t b" style="left:189px;top:182px;font-size:11px;transform:scaleX(.725);color:#111">17/02/2020 17:27</div>
<div class="a t b" style="left:275px;top:182px;font-size:11px;transform:scaleX(.71);color:#111">0340151219</div>
<div class="a" style="left:20px;top:196px;width:166px;height:19px;background:#e1e1e1;border-top:1px solid #fff;border-left:1px solid #a8a8a8;border-right:1px solid #a0a0a0"></div>
<div class="a" style="left:186px;top:196px;width:86px;height:19px;background:#e1e1e1;border-top:1px solid #fff;border-left:1px solid #fff;border-right:1px solid #a0a0a0"></div>
<div class="a" style="left:272px;top:196px;width:61px;height:19px;background:#e1e1e1;border-top:1px solid #fff;border-left:1px solid #fff;border-right:1px solid #a0a0a0"></div>
<div class="a t b" style="left:23px;top:201px;font-size:11px;transform:scaleX(.765);color:#111">MEASUREMENT1</div>
<div class="a t b" style="left:189px;top:201px;font-size:11px;transform:scaleX(.725);color:#111">17/02/2020 17:25</div>
<div class="a t b" style="left:275px;top:201px;font-size:11px;transform:scaleX(.71);color:#111">0340151219</div>
<div class="a" style="left:20px;top:214px;width:313px;height:1px;background:#b8b8b8"></div>
<div class="a" style="left:20px;top:215px;width:313px;height:1px;background:#f4f4f4"></div>
<!-- hscroll -->
<div class="a" style="left:20px;top:584px;width:313px;height:15px;background:#e9e9e9;border-top:1px solid #f8f8f8;border-bottom:1px solid #f4f4f4"></div>
<svg class="a" style="left:25px;top:588px" width="5" height="7"><path d="M4,0.5v6l-4,-3z" fill="#383838"/></svg>
<svg class="a" style="left:323px;top:588px" width="5" height="7"><path d="M0,0.5v6l4,-3z" fill="#383838"/></svg>
<div class="a" style="left:36px;top:585px;width:279px;height:13px;border:1px solid #9a9a9a;border-radius:2px;background:linear-gradient(#f6f6f6 0,#ececec 45%,#dcdcdc 55%,#d0d0d0 100%)"></div>
<div class="a" style="left:172px;top:588px;width:1px;height:6px;background:#555"></div>
<div class="a" style="left:175px;top:588px;width:1px;height:6px;background:#555"></div>
<div class="a" style="left:178px;top:588px;width:1px;height:6px;background:#555"></div>

<div class="a btn" style="left:20px;top:606px;width:47px;height:18px"></div>
<div class="a t b" style="left:31px;top:609px;font-size:12px;letter-spacing:-0.2px">RUS</div>
<div class="a btn" style="left:198px;top:605px;width:64px;height:18px"></div>
<div class="a t" style="left:220px;top:608px;font-size:11px;transform:scaleX(.81)">Print</div>
<div class="a btn" style="left:269px;top:605px;width:64px;height:18px"></div>
<div class="a t" style="left:287px;top:608px;font-size:11px;transform:scaleX(.845)">Delete</div>



<div class="a" style="left:572px;top:533px;width:436px;height:1px;background:#d8d8d8"></div>
<div class="a" style="left:572px;top:533px;width:1px;height:88px;background:#d8d8d8"></div>
<div class="a t ser" style="left:572px;top:505px;transform:scaleX(1.076)">0.0MM</div>
<div class="a t ser r" style="right:16px;top:505px;transform:scaleX(1.095)">50.0MM</div>
<svg class="a" style="left:0;top:0" width="1024" height="638"><g fill="#fff"><rect x="653.7" y="538" width="10" height="10"/><rect x="642.9" y="549.7" width="9.4" height="9"/><rect x="653.7" y="549.7" width="10" height="9"/><rect x="653.7" y="560" width="10" height="10"/><rect x="653.7" y="571.8" width="10" height="9.4"/><rect x="653.7" y="583.2" width="10" height="9"/><rect x="653.7" y="593.8" width="10" height="9"/><rect x="642.9" y="605" width="9.4" height="9.4"/><rect x="653.7" y="605" width="10" height="9.4"/><rect x="666.1" y="605" width="9.8" height="9.4"/><rect x="728.9" y="538" width="9.9" height="10"/><rect x="716.8" y="549.7" width="9.4" height="9"/><rect x="728.9" y="549.7" width="9.9" height="9"/><rect x="705.6" y="560" width="9.5" height="10"/><rect x="728.9" y="560" width="9.9" height="10"/><rect x="693.3" y="571.8" width="9.6" height="9.4"/><rect x="728.9" y="571.8" width="9.9" height="9.4"/><rect x="693.3" y="583.2" width="9.6" height="9"/><rect x="705.6" y="583.2" width="9.5" height="9"/><rect x="716.8" y="583.2" width="9.4" height="9"/><rect x="728.9" y="583.2" width="9.9" height="9"/><rect x="739.9" y="583.2" width="10.9" height="9"/><rect x="728.9" y="593.8" width="9.9" height="9"/><rect x="728.9" y="605" width="9.9" height="9.4"/><rect x="798.7" y="538" width="9.4" height="10"/><rect x="809.6" y="538" width="9.5" height="10"/><rect x="821.7" y="538" width="9.7" height="10"/><rect x="786.1" y="549.7" width="10.1" height="9"/><rect x="833.1" y="549.7" width="10.6" height="9"/><rect x="786.1" y="560" width="10.1" height="10"/><rect x="833.1" y="560" width="10.6" height="10"/><rect x="798.7" y="571.8" width="9.4" height="9.4"/><rect x="809.6" y="571.8" width="9.5" height="9.4"/><rect x="821.7" y="571.8" width="9.7" height="9.4"/><rect x="833.1" y="571.8" width="10.6" height="9.4"/><rect x="833.1" y="583.2" width="10.6" height="9"/><rect x="821.7" y="593.8" width="9.7" height="9"/><rect x="798.7" y="605" width="9.4" height="9.4"/><rect x="809.6" y="605" width="9.5" height="9.4"/><rect x="873.8" y="538" width="9.4" height="10"/><rect x="885.0" y="538" width="9.2" height="10"/><rect x="896.9" y="538" width="9.6" height="10"/><rect x="861.3" y="549.7" width="9.9" height="9"/><rect x="908.1" y="549.7" width="10.7" height="9"/><rect x="861.3" y="560" width="9.9" height="10"/><rect x="908.1" y="560" width="10.7" height="10"/><rect x="873.8" y="571.8" width="9.4" height="9.4"/><rect x="885.0" y="571.8" width="9.2" height="9.4"/><rect x="896.9" y="571.8" width="9.6" height="9.4"/><rect x="908.1" y="571.8" width="10.7" height="9.4"/><rect x="908.1" y="583.2" width="10.7" height="9"/><rect x="896.9" y="593.8" width="9.6" height="9"/><rect x="873.8" y="605" width="9.4" height="9.4"/><rect x="885.0" y="605" width="9.2" height="9.4"/><rect x="768.4" y="605" width="9.8" height="9.4"/></g></svg>
</body></html>
